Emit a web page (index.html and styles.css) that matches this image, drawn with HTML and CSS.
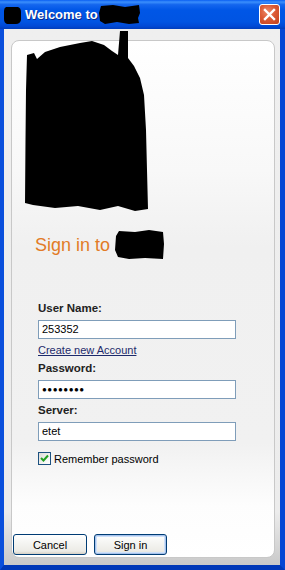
FILE: index.html
```html
<!DOCTYPE html>
<html>
<head>
<meta charset="utf-8">
<link rel="stylesheet" href="styles.css">
</head>
<body>
<div class="window">
  <div class="titlebar">
    <svg class="app-icon" width="19" height="19" viewBox="0 0 19 19"><path d="M3 1 L15 1 Q18 2 18 6 L18 14 Q17 18 13 18 L4 18 Q1 17 1 13 L1 5 Q1 2 3 1 Z" fill="#000"/></svg>
    <span class="title">Welcome to</span>
    <svg class="title-blot" width="42" height="21" viewBox="0 0 42 21"><path d="M2 2 L14 1 L26 3 L40 1 L41 9 L39 14 L40 19 L30 20 L18 18 L6 20 L1 17 L0 9 Z" fill="#000"/></svg>
    <div class="close"><svg width="13" height="13" viewBox="0 0 13 13"><path d="M2 2 L11 11 M11 2 L2 11" stroke="#fff" stroke-width="2.4" stroke-linecap="square"/></svg></div>
  </div>
  <div class="frame">
    <div class="panel">
      <div class="logo">
        <svg width="130" height="182" viewBox="25 30 130 182"><path d="M27 55 L34 53 L37 59 L45 52 L60 47 L80 43 L92 41 L104 45 L112 51 L118 55 L120 31 L128 31 L128 58 L134 66 L140 78 L144 95 L146 130 L147 170 L148 209 L135 211 L118 206 L100 210 L78 206 L55 208 L33 205 L25 203 L25.5 140 L26 90 Z" fill="#000"/></svg>
      </div>
      <div class="heading">
        <span>Sign in to</span>
        <svg width="50" height="30" viewBox="0 0 50 30"><path d="M4 1 L20 2 L34 0 L48 2 L49 14 L48 29 L30 28 L14 29 L3 27 L0 20 L1 6 Z" fill="#000"/></svg>
      </div>
      <div class="form">
        <div class="label first">User Name:</div>
        <div class="input">253352</div>
        <a class="link" href="#">Create new Account</a>
        <div class="label">Password:</div>
        <div class="input dots">●●●●●●●●</div>
        <div class="label">Server:</div>
        <div class="input">etet</div>
        <div class="check-row">
          <span class="checkbox"><svg width="11" height="11" viewBox="0 0 11 11"><path d="M2 5 L4.5 7.5 L9 2.5" fill="none" stroke="#21a121" stroke-width="2"/></svg></span>
          <span>Remember password</span>
        </div>
      </div>
      <div class="buttons">
        <div class="btn">Cancel</div>
        <div class="btn default">Sign in</div>
      </div>
    </div>
  </div>
</div>
</body>
</html>
```
FILE: styles.css
```css
* { box-sizing: border-box; }
html, body { margin: 0; padding: 0; background: #fff; }
body { font-family: "Liberation Sans", Arial, sans-serif; font-size: 11px; color: #000; }

.window { width: 285px; height: 570px; display: flex; flex-direction: column; }

.titlebar {
  height: 29px;
  display: flex;
  align-items: center;
  padding: 0 5px 0 3px;
  background: linear-gradient(#0a5ff2 0%, #3b8ffc 7%, #1466ee 16%, #0056e6 35%, #0054e2 75%, #0049d6 90%, #003dbb 100%);
}
.app-icon { flex: none; margin-top: 1px; }
.title { color: #fff; font-weight: bold; font-size: 13px; margin-left: 3px; text-shadow: 1px 1px 0 #0a2a8a; }
.title-blot { margin-left: 1px; }
.close {
  margin-left: auto;
  width: 21px; height: 21px;
  border: 1px solid #fff;
  border-radius: 3px;
  background: radial-gradient(circle at 40% 35%, #ec8a6a 0%, #dc5a35 45%, #c2401c 100%);
  display: flex; align-items: center; justify-content: center;
}

.frame {
  flex: 1;
  display: flex;
  border-left: 4px solid #0a4fdc;
  border-right: 5px solid #0646d4;
  border-bottom: 5px solid #0038b8;
  background: linear-gradient(#efefef 0%, #ececec 90%, #c9c9c9 100%);
  padding: 11px 5px 7px 7px;
}

.panel {
  flex: 1;
  display: flex;
  flex-direction: column;
  border: 1px solid #c8c8c8;
  border-radius: 8px;
  background: linear-gradient(#ffffff 0%, #f8f8f8 25%, #f0f0f0 40%, #f1f1f1 78%, #fdfdfd 90%, #ffffff 100%);
}

.logo { height: 189px; }
.logo svg { display: block; margin-left: 13px; margin-top: -11px; overflow: visible; }

.heading {
  display: flex;
  align-items: center;
  gap: 5px;
  margin-left: 23px;
  height: 30px;
  color: #e27b26;
  font-size: 18px;
}

.form { margin-left: 26px; display: flex; flex-direction: column; align-items: flex-start; }
.label { font-weight: bold; font-size: 11.5px; line-height: 13px; color: #222; margin-top: 5px; }
.label.first { margin-top: 42px; }
.input {
  width: 198px; height: 19px;
  border: 1px solid #7f9db9;
  background: #fff;
  margin-top: 5px;
  padding: 0 3px;
  line-height: 17px;
  font-size: 11px;
}
.input.dots { font-size: 8px; letter-spacing: 0.5px; }
.link { color: #1d2a6b; text-decoration: underline; line-height: 13px; margin-top: 5px; font-size: 11px; }

.check-row { display: flex; align-items: center; gap: 3px; margin-top: 11px; height: 13px; }
.checkbox {
  width: 13px; height: 13px;
  border: 1px solid #1c5180;
  background: linear-gradient(135deg, #dcdcd7 0%, #f7f7f6 70%, #ffffff 100%);
  display: flex; align-items: center; justify-content: center;
}

.buttons { margin-top: auto; margin-left: 1px; margin-bottom: 2px; display: flex; gap: 7px; }
.btn {
  width: 74px; height: 21px;
  border: 1px solid #003c74;
  border-radius: 3px;
  background: linear-gradient(#ffffff 0%, #f5f5f2 40%, #ecebe6 85%, #d6d0c5 100%);
  display: flex; align-items: center; justify-content: center;
  font-size: 11px;
}
.btn.default {
  width: 73px;
  box-shadow: inset 0 0 0 1px #a6c2ec, inset 0 0 0 2px #cee0f8;
}
```
